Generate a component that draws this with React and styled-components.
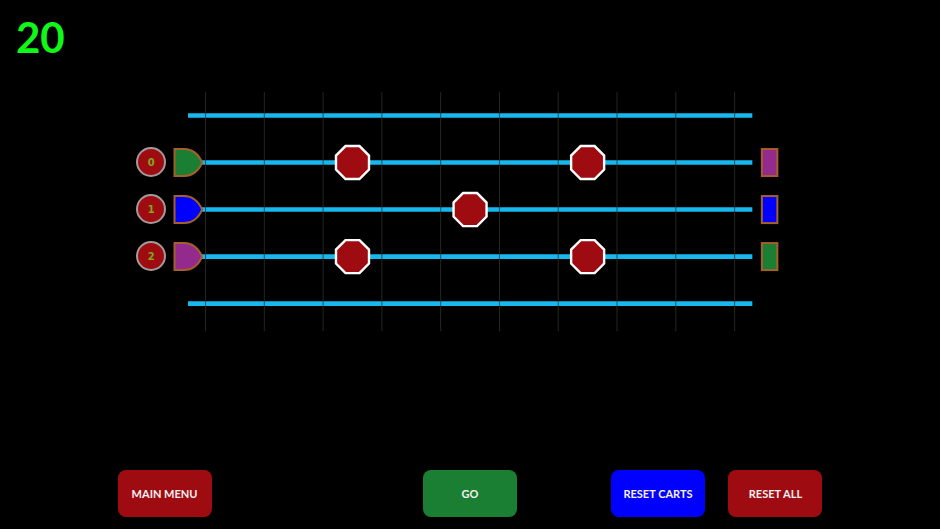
import React, { useState } from 'react';
import styled, { createGlobalStyle } from 'styled-components';

const GlobalStyle = createGlobalStyle`
  * {
    box-sizing: border-box;
  }
  body {
    margin: 0;
    background: #000000;
  }
`;

const FONT = "'Trebuchet MS', Lato, 'Open Sans', sans-serif";

const COLORS = {
  red: '#9e0c12',
  green: '#1a7f32',
  blue: '#0000ff',
  purple: '#952a8e',
  track: '#16b8ee',
  trim: '#a5602a',
};

const Page = styled.div`
  display: flex;
  flex-direction: column;
  min-height: 100vh;
  font-family: ${FONT};
  background: #000000;
`;

const Header = styled.header`
  height: 92px;
  padding: 12px 16px;
`;

const Score = styled.div`
  font-size: 42px;
  line-height: 50px;
  font-weight: 700;
  color: #10f818;
`;

const Board = styled.main`
  display: flex;
  align-items: flex-start;
  gap: 6px;
  width: 71%;
  margin: 0 auto;
`;

const Selectors = styled.div`
  display: flex;
  flex-direction: column;
  gap: 17px;
  padding-top: 55px;
`;

const Selector = styled.button`
  width: 30px;
  height: 30px;
  padding: 0;
  border: 2px solid #a39a9c;
  border-radius: 50%;
  background: ${COLORS.red};
  color: #7fa81a;
  font-family: Verdana, 'DejaVu Sans', sans-serif;
  font-size: 10px;
  font-weight: 700;
  cursor: pointer;
`;

const Track = styled.svg`
  display: block;
  flex: 1;
  min-width: 0;
`;

const Controls = styled.footer`
  display: grid;
  grid-template-columns: 20fr 45fr 20fr 20fr 20fr 5fr 20fr;
  width: 75%;
  margin: auto auto 12px;
`;

const ControlButton = styled.button`
  grid-column: ${({ $column }) => $column};
  height: 47px;
  padding: 0;
  border: none;
  border-radius: 8px;
  background: ${({ $color }) => $color};
  color: #f8f0f2;
  font-family: ${FONT};
  font-size: 11px;
  font-weight: 700;
  white-space: nowrap;
  cursor: pointer;
`;

const LANE_GAP = 47;
const COLUMN_GAP = 58.75;

const laneY = (lane) => 23.5 + lane * LANE_GAP;
const columnX = (column) => 33.5 + column * COLUMN_GAP;

const START_CARTS = [COLORS.green, COLORS.blue, COLORS.purple];
const GOALS = [COLORS.purple, COLORS.blue, COLORS.green];

const STOPS = [
  { lane: 1, column: 2.5 },
  { lane: 1, column: 6.5 },
  { lane: 2, column: 4.5 },
  { lane: 3, column: 2.5 },
  { lane: 3, column: 6.5 },
];

const Stop = ({ x, y }) => (
  <polygon
    transform={`translate(${x} ${y})`}
    points="-7,-16.5 7,-16.5 16.5,-7 16.5,7 7,16.5 -7,16.5 -16.5,7 -16.5,-7"
    fill={COLORS.red}
    stroke="#ffffff"
    strokeWidth="2.4"
  />
);

const Cart = ({ y, color }) => (
  <path
    transform={`translate(2.5 ${y})`}
    d="M0 -13.5H10C17 -13.5 24 -9 27.5 0C24 9 17 13.5 10 13.5H0Z"
    fill={color}
    stroke={COLORS.trim}
    strokeWidth="2"
  />
);

const App = () => {
  const [carts, setCarts] = useState(START_CARTS);

  // send the chosen cart to the bottom lane
  const moveCart = (index) => {
    setCarts([...carts.filter((_, i) => i !== index), carts[index]]);
  };

  const resetCarts = () => setCarts(START_CARTS);

  return (
    <Page>
      <GlobalStyle />
      <Header>
        <Score>20</Score>
      </Header>
      <Board>
        <Selectors>
          {carts.map((_, index) => (
            <Selector key={index} type="button" onClick={() => moveCart(index)}>
              {index}
            </Selector>
          ))}
        </Selectors>
        <Track viewBox="0 0 631 240">
          {[0, 1, 2, 3, 4].map((lane) => (
            <line
              key={lane}
              x1="16"
              x2="580"
              y1={laneY(lane)}
              y2={laneY(lane)}
              stroke={COLORS.track}
              strokeWidth="4.6"
            />
          ))}
          {Array.from({ length: 10 }, (_, column) => (
            <line
              key={column}
              x1={columnX(column)}
              x2={columnX(column)}
              y1="0"
              y2="239"
              stroke="#303030"
              strokeOpacity="0.8"
            />
          ))}
          {/* the carts hide the start of their own lane */}
          <rect x="0" y="54" width="20" height="127" fill="#000000" />
          {carts.map((color, index) => (
            <Cart key={color} y={laneY(index + 1)} color={color} />
          ))}
          {STOPS.map(({ lane, column }) => (
            <Stop key={`${lane}-${column}`} x={columnX(column)} y={laneY(lane)} />
          ))}
          {GOALS.map((color, index) => (
            <rect
              key={color}
              x="589.5"
              y={laneY(index + 1) - 13.5}
              width="15.5"
              height="27"
              fill={color}
              stroke={COLORS.trim}
              strokeWidth="2"
            />
          ))}
        </Track>
      </Board>
      <Controls>
        <ControlButton type="button" $column={1} $color={COLORS.red}>
          MAIN MENU
        </ControlButton>
        <ControlButton type="button" $column={3} $color={COLORS.green}>
          GO
        </ControlButton>
        <ControlButton type="button" $column={5} $color={COLORS.blue} onClick={resetCarts}>
          RESET CARTS
        </ControlButton>
        <ControlButton type="button" $column={7} $color={COLORS.red} onClick={resetCarts}>
          RESET ALL
        </ControlButton>
      </Controls>
    </Page>
  );
};

export default App;
